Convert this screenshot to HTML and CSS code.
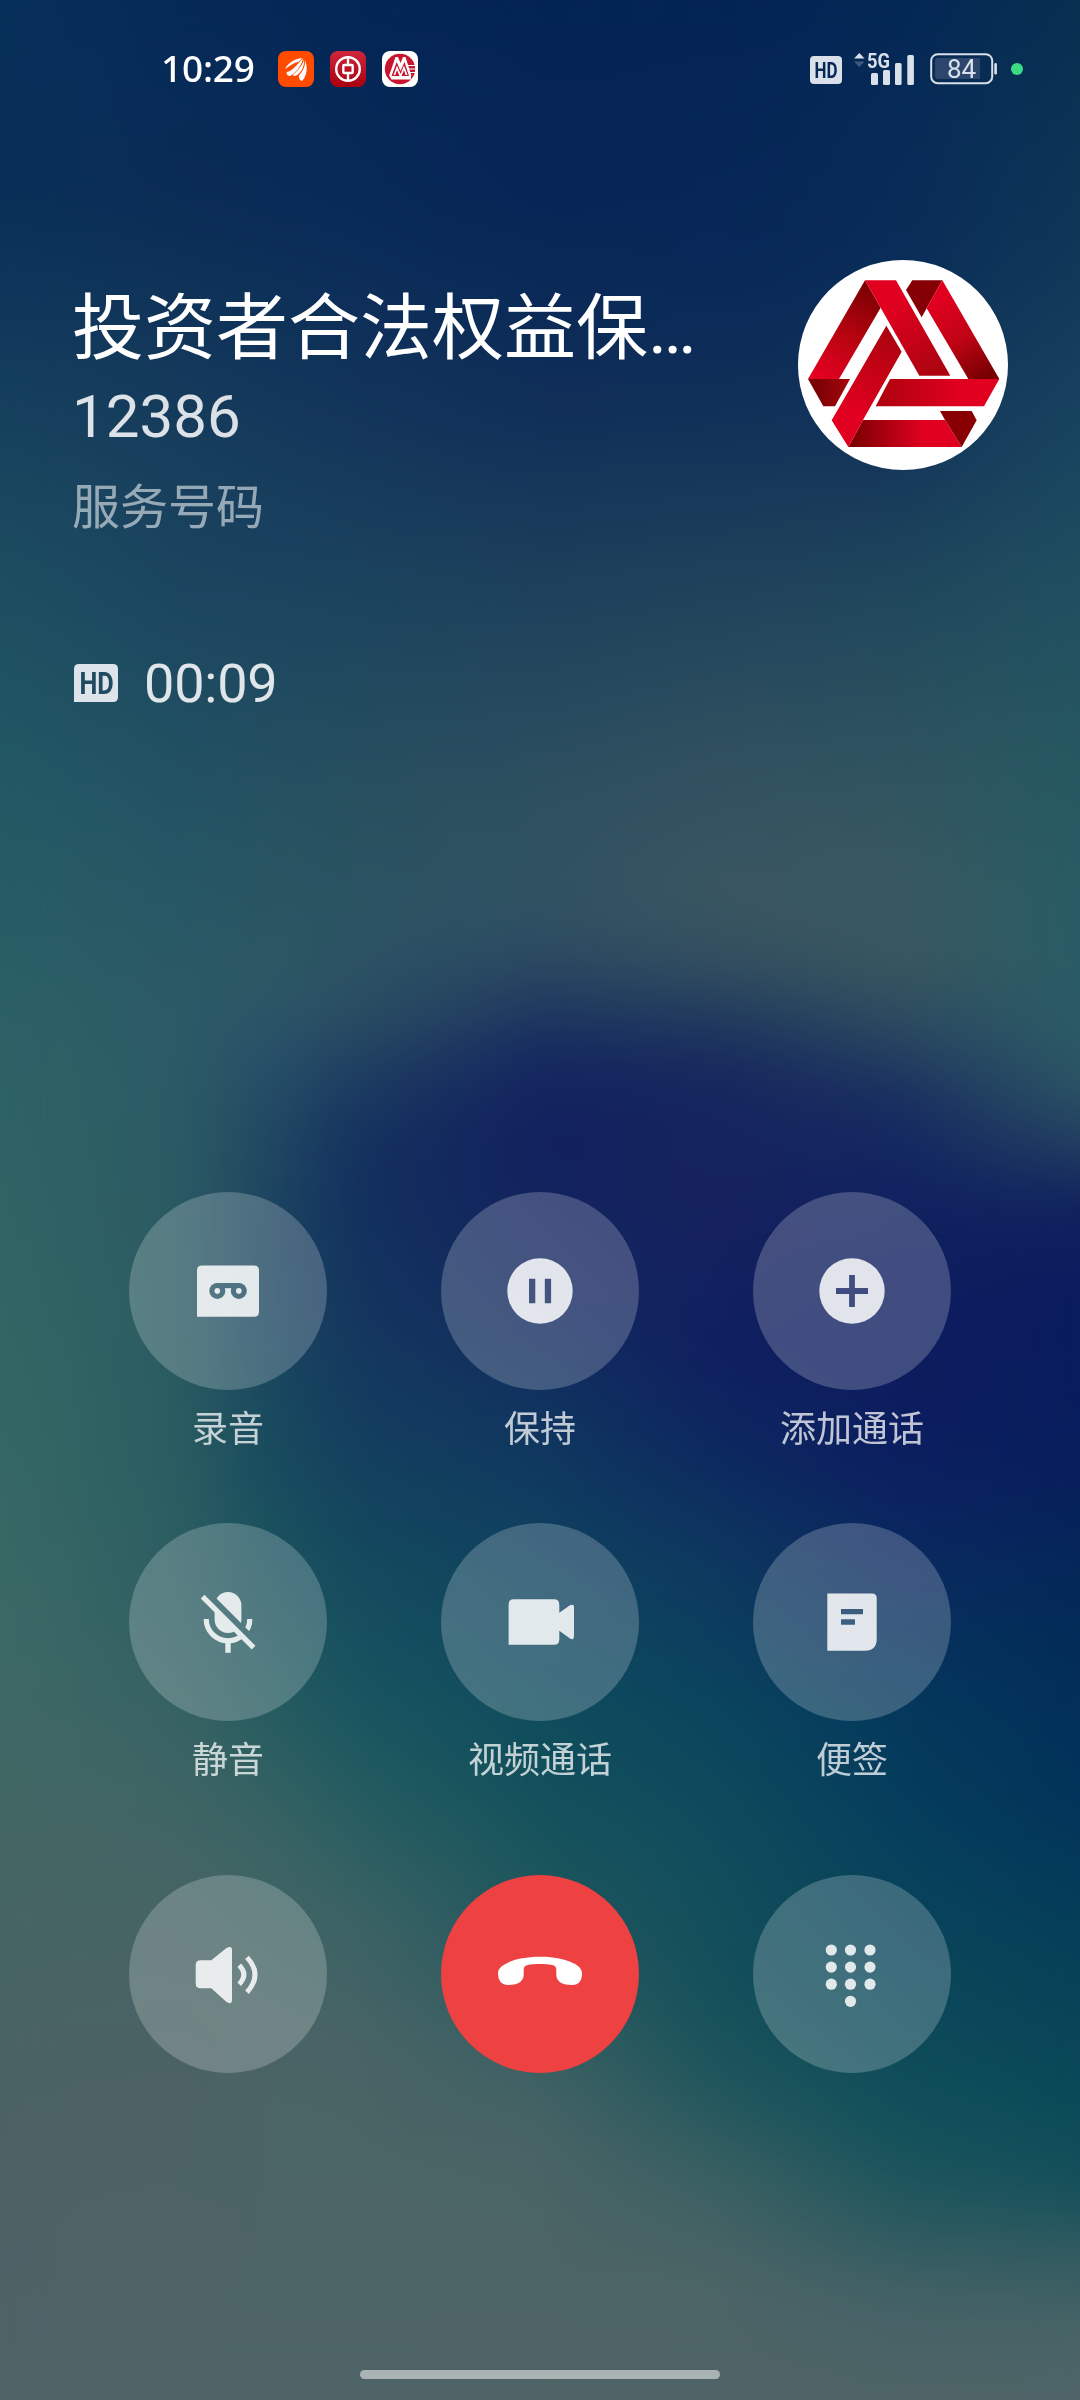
FILE: index.html
```html
<!DOCTYPE html>
<html lang="zh-CN">
<head>
<meta charset="utf-8">
<title>通话中</title>
<link rel="stylesheet" href="styles.css">
</head>
<body>
<div class="wallpaper">
  <i class="w0"></i><i class="w1"></i><i class="w2"></i><i class="w3"></i><i class="w4"></i><i class="w5"></i><i class="w6"></i><i class="w7"></i><i class="soften"></i>
</div>
<div class="screen">
  <header class="status">
    <div class="status-left">
      <span class="clock">10:29</span>
      <svg class="app" viewBox="0 0 36 36"><rect width="36" height="36" rx="8" fill="#ff4b00"/><g fill="#fff"><path d="M7 18C10 12 16 8 24 7C23 9 22 10 20 11C15 12 12 15 7 18Z"/><path d="M12 25C9 25 8 22 9 21C14 20 19 14 25 7C24 14 18 22 12 25Z"/><path d="M17 25C15 25 14 24 15 22C20 19 24 14 26 8C27 15 23 23 17 25Z"/><path d="M24 30C21 29 21 26 21 24C25 20 27 15 27 9C30 16 29 25 24 30Z"/></g><path d="M8 20C16 17 20 12 25 7M14 24C20 20 24 14 26 8M20 25C24 21 27 15 27 9" stroke="#ff4b00" stroke-width=".7" fill="none"/></svg>
      <svg class="app" viewBox="0 0 36 36"><defs><linearGradient id="boc" x2="0" y2="1"><stop stop-color="#d0263c"/><stop offset="1" stop-color="#a90010"/></linearGradient></defs><rect width="36" height="36" rx="8" fill="url(#boc)"/><g fill="none" stroke="#fff" stroke-width="2.4"><circle cx="18" cy="18" r="11.8"/><rect x="13.3" y="14" width="9.4" height="8" rx="1"/><path d="M18 6V14M18 22V30"/></g></svg>
      <svg class="app" viewBox="0 0 36 36"><rect width="36" height="36" rx="8" fill="#fff"/><circle cx="18" cy="18" r="15.2" fill="#c8152d"/><path fill="#fff" d="M7 25L13.5 6H16L18.5 12L21 6H23.5L29.5 25H27L22.5 11L18.5 20L14.7 11L9.5 25Z"/><path fill="#fff" d="M11.5 24L15 14.5L18.5 23L22 14.5L25.5 24H23.5L22 19L19.5 25H17.5L15 19L13.3 24Z"/><path d="M7.5 25H29V28.5H9.5Z" fill="#fff"/><path d="M26 14.5H35M27 18H35M28 21.5H35" stroke="#fff" stroke-width="1.2"/></svg>
    </div>
    <div class="status-right">
      <svg class="hd-status" viewBox="0 0 32 28"><rect width="32" height="28" rx="4" fill="#d9e0ea"/><text class="hd-text" x="4.5" y="21.5" font-size="21.5" textLength="23" lengthAdjust="spacingAndGlyphs" fill="#062856">HD</text></svg>
      <svg class="signal" viewBox="0 0 62 34"><path d="M0 6.5L5.3 1L10.6 6.5Z" fill="#d9e0ea"/><path d="M0 9.5L5.3 15L10.6 9.5Z" fill="#3f5a80"/><text class="net" x="13" y="15.8" font-size="21" textLength="23" lengthAdjust="spacingAndGlyphs" fill="#d9e0ea">5G</text><g fill="#d9e0ea"><rect x="17" y="21" width="7" height="12" rx="1.5"/><rect x="29" y="18" width="7" height="15" rx="1.5"/><rect x="41" y="11" width="6.6" height="22" rx="1.5"/><rect x="53.3" y="3" width="6.6" height="30" rx="1.5"/></g></svg>
      <svg class="battery" viewBox="0 0 68 32"><rect x="1.2" y="1.2" width="61" height="29" rx="6.5" fill="none" stroke="#d9e0ea" stroke-width="2"/><path d="M8 5H50V26H8Q5 26 5 23V8Q5 5 8 5Z" fill="#2c466e"/><rect x="64.3" y="10" width="2.6" height="11.5" rx="1.2" fill="#d9e0ea"/><text class="level" x="31.5" y="24.8" text-anchor="middle">84</text></svg>
      <span class="dot"></span>
    </div>
  </header>

  <section class="caller">
    <div class="info">
      <h1>投资者合法权益保…</h1>
      <div class="number">12386</div>
      <div class="kind">服务号码</div>
    </div>
    <div class="avatar">
      <svg viewBox="54 60 630 630">
        <defs>
          <linearGradient id="ga" gradientUnits="userSpaceOnUse" x1="130" y1="410" x2="275" y2="150"><stop stop-color="#e10020"/><stop offset=".5" stop-color="#b5040f"/><stop offset="1" stop-color="#7d0003"/></linearGradient>
          <linearGradient id="gb" gradientUnits="userSpaceOnUse" x1="330" y1="200" x2="460" y2="406"><stop stop-color="#e10020"/><stop offset="1" stop-color="#ab040f"/></linearGradient>
          <linearGradient id="gc" gradientUnits="userSpaceOnUse" x1="475" y1="180" x2="610" y2="417"><stop stop-color="#e10020"/><stop offset=".5" stop-color="#c00414"/><stop offset="1" stop-color="#760002"/></linearGradient>
          <linearGradient id="gd" gradientUnits="userSpaceOnUse" x1="290" y1="0" x2="540" y2="0"><stop stop-color="#ad030e"/><stop offset="1" stop-color="#e10020"/></linearGradient>
          <linearGradient id="ge" gradientUnits="userSpaceOnUse" x1="340" y1="290" x2="210" y2="510"><stop stop-color="#ad030e"/><stop offset="1" stop-color="#e10020"/></linearGradient>
          <linearGradient id="gf" gradientUnits="userSpaceOnUse" x1="215" y1="0" x2="430" y2="0"><stop stop-color="#7a0002"/><stop offset="1" stop-color="#e10020"/></linearGradient>
          <linearGradient id="gg" gradientUnits="userSpaceOnUse" x1="100" y1="0" x2="200" y2="0"><stop stop-color="#780003"/><stop offset="1" stop-color="#a0060c"/></linearGradient>
        </defs>
        <path fill="url(#ga)" d="M255 121L302 203L177 417H84Z"/>
        <path fill="url(#gb)" d="M255 121H348L511 407H418Z"/>
        <path fill="#850004" d="M397 121H487L440 205L425 232L378 150Z"/>
        <path fill="url(#gc)" d="M487 121L658 417H565L440 205Z"/>
        <path fill="url(#gd)" d="M330 417H658L612 499H287Z"/>
        <path fill="url(#gg)" d="M84 417H210L165 499H130Z"/>
        <path fill="url(#gf)" d="M249 540H495L545 621H205Z"/>
        <path fill="url(#ge)" d="M319 257L365 335L249 540L205 621L155 541Z"/>
        <path fill="#880004" d="M480 513H575L590 541L545 621L495 540Z"/>
      </svg>
    </div>
  </section>

  <div class="timer">
    <svg class="hd-call" viewBox="0 0 44 38"><path d="M5 0H39Q44 0 44 5V33Q44 38 39 38H0V5Q0 0 5 0Z" fill="#dee5ea"/><text class="hd-text" x="5.5" y="30" font-size="30.5" textLength="34" lengthAdjust="spacingAndGlyphs" fill="#1f4a60">HD</text></svg>
    <span>00:09</span>
  </div>

  <main class="pad">
    <div class="key">
      <div class="disc"><svg viewBox="0 0 198 198"><mask id="m1"><rect width="198" height="198" fill="#fff"/><circle cx="88.3" cy="98.9" r="8" fill="#000"/><circle cx="109.8" cy="98.9" r="8" fill="#000"/><path d="M88 91H110V96.2H88Z" fill="#000"/><circle cx="88.3" cy="98.9" r="2.8" fill="#fff"/><circle cx="109.8" cy="98.9" r="2.8" fill="#fff"/></mask><path mask="url(#m1)" d="M73 73.6H125Q130 73.6 130 78.6V119.7Q130 124.7 125 124.7H68V78.6Q68 73.6 73 73.6Z"/></svg></div>
      <div class="label">录音</div>
    </div>
    <div class="key">
      <div class="disc"><svg viewBox="0 0 198 198"><path fill-rule="evenodd" d="M99 66.3A32.7 32.7 0 1 1 99 131.7A32.7 32.7 0 1 1 99 66.3ZM88 86.7V111.3H94.3V86.7ZM103.8 86.7V111.3H110.1V86.7Z"/></svg></div>
      <div class="label">保持</div>
    </div>
    <div class="key">
      <div class="disc"><svg viewBox="0 0 198 198"><path fill-rule="evenodd" d="M99 66.3A32.7 32.7 0 1 1 99 131.7A32.7 32.7 0 1 1 99 66.3ZM96.1 83V96.1H83V101.9H96.1V115H101.9V101.9H115V96.1H101.9V83Z"/></svg></div>
      <div class="label">添加通话</div>
    </div>
    <div class="key">
      <div class="disc"><svg viewBox="0 0 198 198"><mask id="m2"><rect width="198" height="198" fill="#fff"/><path d="M72 66L132 126" stroke="#000" stroke-width="8.4"/></mask><g opacity=".85"><g mask="url(#m2)"><rect x="85.6" y="69" width="26.8" height="41" rx="13.4" fill="#fff"/><path d="M77.2 96A21.8 21.8 0 0 0 120.8 96" fill="none" stroke="#fff" stroke-width="5.2"/><path d="M96.3 118H101.7V129.8H96.3Z" fill="#fff"/></g><path d="M73.6 73.6L124.6 124.6" stroke="#fff" stroke-width="5.2"/></g></svg></div>
      <div class="label">静音</div>
    </div>
    <div class="key">
      <div class="disc"><svg viewBox="0 0 198 198"><path d="M72.8 76.3H113Q118.3 76.3 118.3 81.5V89.7L129 82.3Q133 80.5 133 84V113.5Q133 117.5 129 115.5L118.3 107.7V116.5Q118.3 121.8 113 121.8H67.6V81.5Q67.6 76.3 72.8 76.3Z"/></svg></div>
      <div class="label">视频通话</div>
    </div>
    <div class="key">
      <div class="disc"><svg viewBox="0 0 198 198"><path fill-rule="evenodd" d="M74.3 70.5H119Q123.7 70.5 123.7 75V116Q123.7 127.7 112 127.7H74.3ZM88 86V91.2H110V86ZM88 96.3V101.7H102V96.3Z"/></svg></div>
      <div class="label">便签</div>
    </div>
    <div class="key">
      <div class="disc"><svg viewBox="0 0 198 198"><path d="M71.5 85.3H82.3L97.5 73Q103 70 103 75V125Q103 130 97.5 127L82.3 113.3H71.5Q66.7 113.3 66.7 108.5V90Q66.7 85.3 71.5 85.3Z"/><path class="wave" d="M110.2 90.2Q119.5 99.5 110.2 109.2M118 82.4Q134 99.5 118 117.2"/></svg></div>
    </div>
    <div class="key">
      <div class="disc end"><svg viewBox="0 0 198 198"><path d="M57 98C57 89 76 81.8 99 81.8C122 81.8 141 89 141 98C141 106 138 110 131 110C122 110 115.5 107 115.3 100V94.5C115.3 92 114 90.6 111 90C104 88.8 94 88.8 87 90C84 90.6 82.7 92 82.7 94.5V100C82.5 107 76 110 67 110C60 110 57 105 57 98Z"/></svg></div>
    </div>
    <div class="key">
      <div class="disc"><svg viewBox="0 0 198 198"><circle cx="78.3" cy="75" r="5.6"/><circle cx="97.5" cy="75" r="5.6"/><circle cx="117" cy="75" r="5.6"/><circle cx="78.3" cy="92.1" r="5.6"/><circle cx="97.5" cy="92.1" r="5.6"/><circle cx="117" cy="92.1" r="5.6"/><circle cx="78.3" cy="109.2" r="5.6"/><circle cx="97.5" cy="109.2" r="5.6"/><circle cx="117" cy="109.2" r="5.6"/><circle cx="97.5" cy="126.3" r="5.6"/></svg></div>
    </div>
  </main>

  <div class="home"></div>
</div>
</body>
</html>
```
FILE: styles.css
```css
* { box-sizing: border-box; }
body {
  margin: 0;
  width: 1080px;
  height: 2400px;
  overflow: hidden;
  position: relative;
  background: #14405c;
  color: #fff;
  font-family: "Noto Sans CJK SC", sans-serif;
}

/* Wallpaper: vertical colour columns, each faded into the next */
.wallpaper { position: absolute; inset: 0; overflow: hidden; }
.wallpaper i { position: absolute; inset: 0; }
.w0 { background: linear-gradient(#07305a 0, #0a3058 200px, #123a5c 330px, #1c4a60 520px, #225864 750px, #2e6266 1050px, #346864 1400px, #3c6a66 1620px, #446664 1850px, #4c6264 2100px, #506468 2400px); }
.w1 { background: linear-gradient(#062a58 0, #0a2c56 200px, #163c5c 420px, #1c4660 600px, #245464 820px, #2c5a66 1000px, #2c5a63 1200px, #2a5c61 1440px, #2e5e62 1600px, #3c6464 1760px, #466464 1900px, #4c6264 2050px, #4f6466 2400px);
  -webkit-mask-image: linear-gradient(90deg, transparent 0, #000 180px); mask-image: linear-gradient(90deg, transparent 0, #000 180px); }
.w2 { background: linear-gradient(#052857 0, #092b57 200px, #14385b 410px, #1c4560 600px, #265261 810px, #2d5864 980px, #28506a 1060px, #204862 1130px, #1c4460 1220px, #1a4660 1340px, #184a5e 1440px, #1a525e 1550px, #265c60 1710px, #3c6464 1850px, #4a6466 2040px, #4f6466 2400px);
  -webkit-mask-image: linear-gradient(90deg, transparent 180px, #000 270px); mask-image: linear-gradient(90deg, transparent 180px, #000 270px); }
.w3 { background: linear-gradient(#042656 0, #082a58 200px, #12345a 400px, #1c445e 600px, #28505f 800px, #2c5464 940px, #2a4c62 1020px, #1c3b60 1080px, #13305e 1150px, #12305e 1200px, #14345e 1300px, #143e5e 1440px, #14485e 1550px, #185460 1700px, #245c60 1800px, #3a6264 1910px, #4a6466 2060px, #4f6466 2400px);
  -webkit-mask-image: linear-gradient(90deg, transparent 270px, #000 360px); mask-image: linear-gradient(90deg, transparent 270px, #000 360px); }
.w4 { background: linear-gradient(#032455 0, #062657 200px, #102e58 400px, #1e425c 600px, #2e5060 800px, #305262 890px, #2e4e62 940px, #223c60 1000px, #142860 1060px, #12205e 1130px, #12285f 1300px, #10385f 1450px, #0f455f 1600px, #104e5c 1750px, #18545c 1850px, #24585e 1950px, #3a6062 2050px, #4a6466 2150px, #506466 2400px);
  -webkit-mask-image: linear-gradient(90deg, transparent 360px, #000 540px); mask-image: linear-gradient(90deg, transparent 360px, #000 540px); }
.w5 { background: linear-gradient(#032455 0, #072858 250px, #102f58 400px, #21445c 600px, #30505f 750px, #3a5662 890px, #34505f 960px, #203a5e 1020px, #16265e 1080px, #16225e 1200px, #101f60 1350px, #0c285f 1450px, #0e365f 1550px, #0a445e 1700px, #104c5c 1850px, #14505a 2000px, #20565c 2090px, #3a6062 2180px, #4c6466 2280px, #506466 2400px);
  -webkit-mask-image: linear-gradient(90deg, transparent 540px, #000 720px); mask-image: linear-gradient(90deg, transparent 540px, #000 720px); }
.w6 { background: linear-gradient(#042856 0, #0a2c58 250px, #14365a 450px, #20485c 600px, #2e535f 750px, #3a5962 900px, #38565f 970px, #2a4860 1030px, #182e60 1100px, #102260 1190px, #0e1c5e 1300px, #0c1e60 1450px, #0a2860 1550px, #04385c 1700px, #06405c 1850px, #0c485a 2000px, #10505a 2120px, #26585e 2210px, #446266 2300px, #506466 2400px);
  -webkit-mask-image: linear-gradient(90deg, transparent 720px, #000 900px); mask-image: linear-gradient(90deg, transparent 720px, #000 900px); }
.w7 { background: linear-gradient(#083050 0, #103858 250px, #1a4660 450px, #225060 600px, #265860 750px, #285c64 900px, #2c5c66 1020px, #2c5464 1090px, #223e60 1145px, #10225e 1210px, #0a1c5e 1300px, #081e5c 1450px, #042a58 1600px, #02345a 1800px, #064058 1950px, #0a4a58 2100px, #14505a 2180px, #305a60 2250px, #486466 2330px, #506468 2400px);
  -webkit-mask-image: linear-gradient(90deg, transparent 900px, #000 1080px); mask-image: linear-gradient(90deg, transparent 900px, #000 1080px); }
.wallpaper .soften { backdrop-filter: blur(24px); }

.screen { position: relative; height: 2400px; display: flex; flex-direction: column; }
svg { display: block; overflow: visible; }

.status { height: 138px; padding: 0 57px 0 161px; display: flex; justify-content: space-between; align-items: center; }
.status-left { display: flex; align-items: center; gap: 16px; }
.clock { width: 101px; padding-bottom: 2px; font: 500 37px/50px "Noto Sans", sans-serif; letter-spacing: -.2px; }
.app { width: 36px; height: 36px; }
.status-right { display: flex; align-items: center; }
.hd-status { width: 32px; height: 28px; margin: 2px 12px 0 0; }
.hd-text { font-family: Roboto, sans-serif; font-weight: 700; }
.signal { width: 62px; height: 34px; margin-right: 14px; }
.net { font-family: Roboto, sans-serif; font-weight: 700; }
.battery { width: 68px; height: 32px; margin-right: 13px; }
.level { font: 400 26px Roboto, sans-serif; fill: #d9e0ea; }
.dot { width: 12px; height: 12px; border-radius: 50%; background: #3ddc84; }

.caller { height: 515px; padding: 122px 72px 0 72px; display: flex; justify-content: space-between; }
.info { padding-top: 27px; }
h1 { margin: 0; height: 95px; font: 400 72px/84px Roboto, "Noto Sans CJK SC", sans-serif; white-space: nowrap; }
.number { height: 91px; font: 400 60px/70px Roboto, sans-serif; color: rgba(255, 255, 255, .85); }
.kind { font-size: 48px; line-height: 60px; color: rgba(255, 255, 255, .55); }
.avatar { width: 210px; height: 210px; border-radius: 50%; background: #fff; overflow: hidden; }

.timer { height: 60px; margin-left: 74px; display: flex; align-items: center; gap: 26px; font: 400 54px/60px Roboto, sans-serif; color: rgba(255, 255, 255, .86); letter-spacing: -.2px; }
.timer span { padding-top: 2px; }
.hd-call { width: 44px; height: 38px; }

.pad { margin: 479px 0 0 72px; width: 936px; display: grid; grid-template-columns: repeat(3, 312px); grid-template-rows: 331px 352px 198px; }
.disc { width: 198px; height: 198px; margin: 0 auto; border-radius: 50%; background: rgba(255, 255, 255, .21); }
.disc svg { width: 198px; height: 198px; fill: rgba(255, 255, 255, .85); }
.disc .wave { fill: none; stroke: rgba(255, 255, 255, .85); stroke-width: 5; }
.disc.end { background: #ee4141; }
.disc.end svg { fill: #fff; }
.label { margin-top: 10px; text-align: center; font-size: 36px; line-height: 52px; color: rgba(255, 255, 255, .74); }

.home { margin: 297px auto 0; width: 360px; height: 9px; border-radius: 5px; background: #a9b3b4; }
```
